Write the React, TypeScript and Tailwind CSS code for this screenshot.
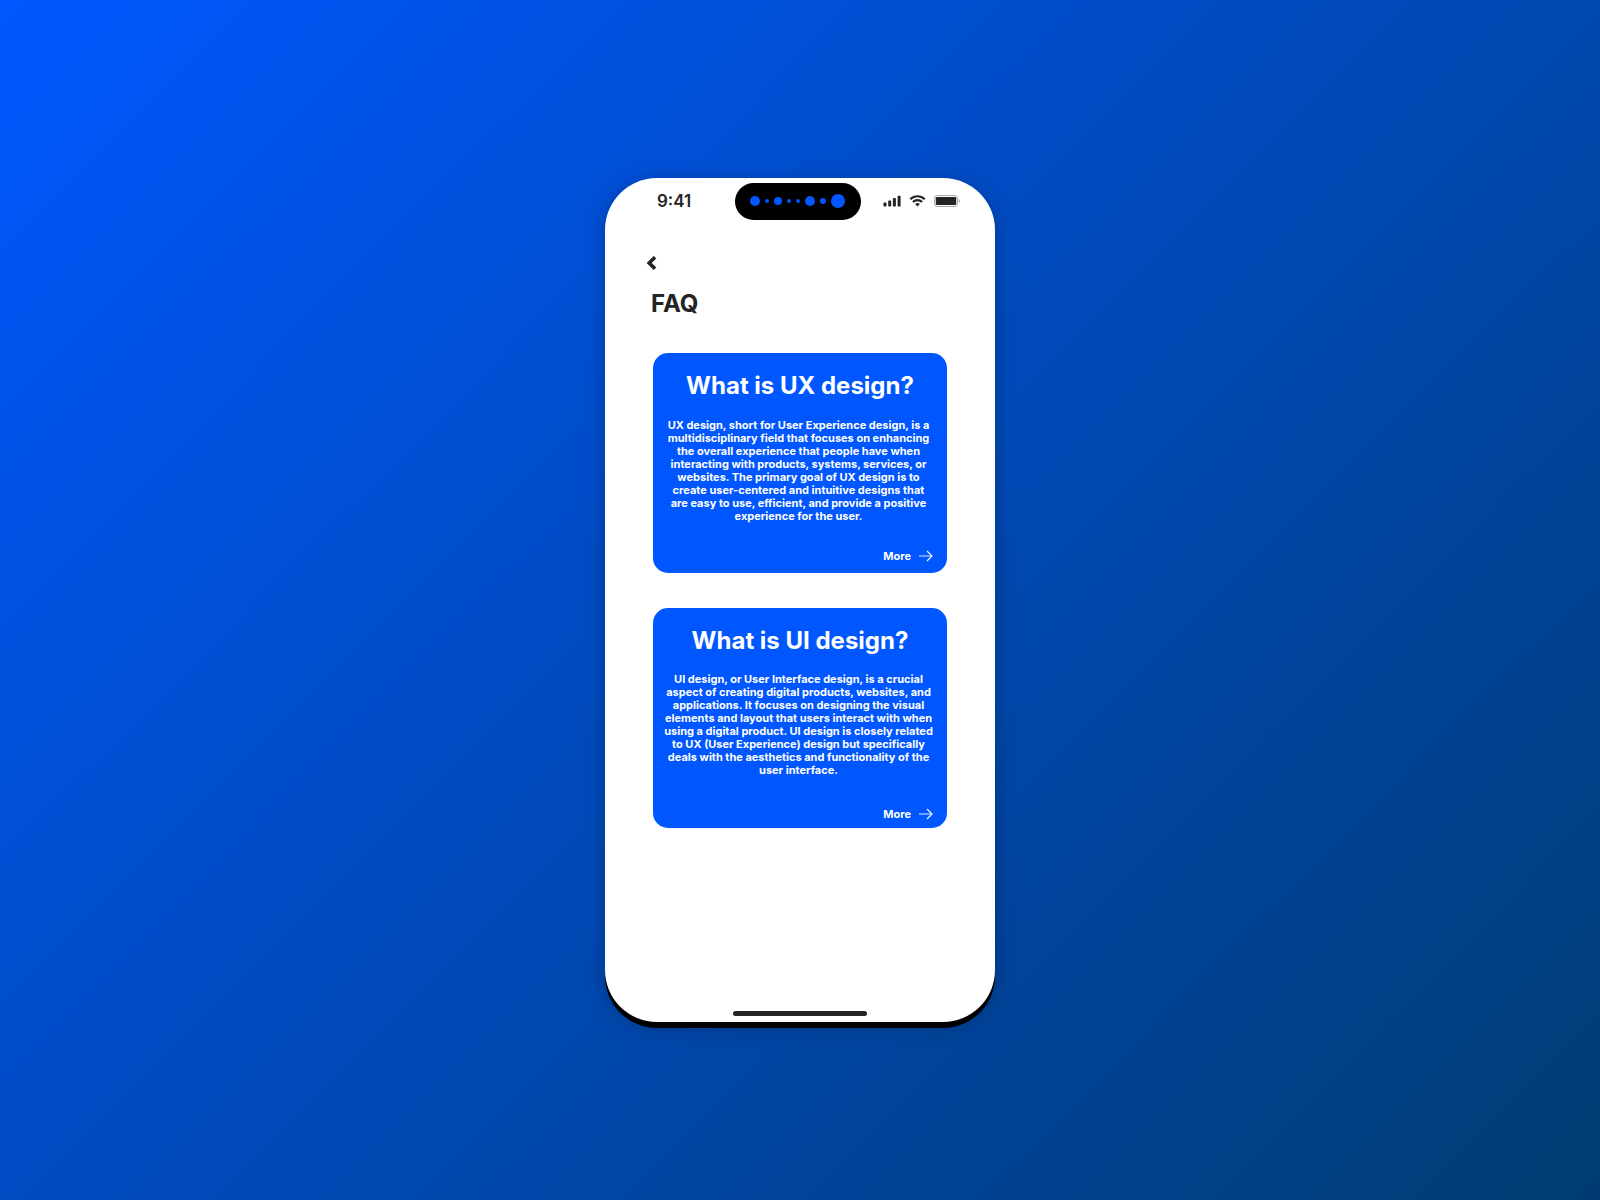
const dots = ['size-2.5', 'size-1', 'size-2', 'size-1', 'size-1', 'size-2.5', 'size-1.5', 'size-3.5'];

const questions = [
  {
    id: 'ux',
    title: 'What is UX design?',
    text: 'UX design, short for User Experience design, is a multidisciplinary field that focuses on enhancing the overall experience that people have when interacting with products, systems, services, or websites. The primary goal of UX design is to create user-centered and intuitive designs that are easy to use, efficient, and provide a positive experience for the user.',
    textClass: 'mt-[19px] px-3',
    linkClass: 'pb-[9px]',
  },
  {
    id: 'ui',
    title: 'What is UI design?',
    text: 'UI design, or User Interface design, is a crucial aspect of creating digital products, websites, and applications. It focuses on designing the visual elements and layout that users interact with when using a digital product. UI design is closely related to UX (User Experience) design but specifically deals with the aesthetics and functionality of the user interface.',
    textClass: 'mt-[18px] px-2.5',
    linkClass: 'pb-1.5',
  },
];

function StatusIcons() {
  return (
    <div className="flex items-center gap-2 text-[#242424]">
      <svg width="18" height="12" viewBox="0 0 18 12" fill="currentColor" aria-label="Signal">
        <rect x="0.5" y="7.5" width="3" height="4" rx="0.8" />
        <rect x="5.2" y="5.5" width="3" height="6" rx="0.8" />
        <rect x="9.9" y="3" width="3" height="8.5" rx="0.8" />
        <rect x="14.6" y="0.7" width="3" height="10.8" rx="0.8" />
      </svg>
      <svg width="17" height="12" viewBox="0 0 17 12" fill="none" stroke="currentColor" strokeWidth="2.1" aria-label="Wi-Fi">
        <path d="M1.3 4.2a10.3 10.3 0 0 1 14.4 0" />
        <path d="M3.9 7a6.6 6.6 0 0 1 9.2 0" />
        <path d="M6.1 9.1a3.5 3.5 0 0 1 4.8 0l-2.4 2.4z" fill="currentColor" stroke="none" />
      </svg>
      <svg width="26" height="12" viewBox="0 0 26 12" fill="none" aria-label="Battery">
        <rect x="0.5" y="0.5" width="23" height="11" rx="3" stroke="currentColor" strokeOpacity="0.4" />
        <rect x="1.8" y="2" width="20.4" height="8" rx="1.2" fill="currentColor" />
        <path d="M24.7 4.2v3.6c.8-.3 1.2-1 1.2-1.8s-.4-1.5-1.2-1.8z" fill="currentColor" fillOpacity="0.4" />
      </svg>
    </div>
  );
}

function StatusBar() {
  return (
    <header className="grid grid-cols-[127px_126px_1fr] items-center pt-[5px] pl-[3px]">
      <span className="pb-0.5 pl-[49px] text-[17px] leading-5 font-semibold text-[#242424]">9:41</span>
      <div className="flex h-[37px] items-center gap-[5px] rounded-full bg-black pb-px pl-[15px]">
        {dots.map((size, i) => (
          <span key={i} className={`rounded-full bg-[#0057ff] ${size}`} />
        ))}
      </div>
      <div className="pb-0.5 pl-[22px]">
        <StatusIcons />
      </div>
    </header>
  );
}

export default function App() {
  return (
    <div className="flex min-h-screen items-center justify-center bg-[linear-gradient(135deg,#0057ff,#003c72)] font-['Inter',sans-serif]">
      <div className="flex min-h-[844px] w-full max-w-[390px] flex-col rounded-[52px] bg-white shadow-[0_6px_0_0_#000,0_4px_20px_0_rgba(0,0,0,0.25)]">
        <StatusBar />
        <main className="px-12">
          <button type="button" aria-label="Back" className="mt-9 -ml-[7px] block cursor-pointer text-[#242424]">
            <svg width="11" height="14" viewBox="0 0 11 14" fill="none" stroke="currentColor" strokeWidth="3.6">
              <path d="M9 1.2L3.2 7 9 12.8" />
            </svg>
          </button>
          <h1 className="mt-[19px] -ml-0.5 text-2xl leading-[29px] font-bold text-[#242424]">FAQ</h1>
          <div className="mt-[35px] flex flex-col gap-[35px]">
            {questions.map((q) => (
              <article key={q.id} className="flex min-h-[220px] flex-col rounded-[15px] bg-[#0057ff] text-white">
                <h2 className="mt-[18px] text-center text-2xl leading-[29px] font-bold">{q.title}</h2>
                <p className={`mr-[3px] text-center text-[11px] leading-[13px] font-bold ${q.textClass}`}>{q.text}</p>
                <a
                  href={`#${q.id}`}
                  className={`mt-auto mr-3.5 flex items-center gap-2 self-end text-[11px] leading-4 font-bold ${q.linkClass}`}
                >
                  More
                  <svg width="14" height="12" viewBox="0 0 14 12" fill="none" stroke="white" strokeWidth="1.1">
                    <path d="M0 6h12.8" strokeOpacity="0.8" />
                    <path d="M8 1l5 5-5 5" />
                  </svg>
                </a>
              </article>
            ))}
          </div>
        </main>
        <div className="mx-auto mt-auto mb-1.5 h-[5px] w-[134px] rounded-full bg-[#242424]" />
      </div>
    </div>
  );
}
